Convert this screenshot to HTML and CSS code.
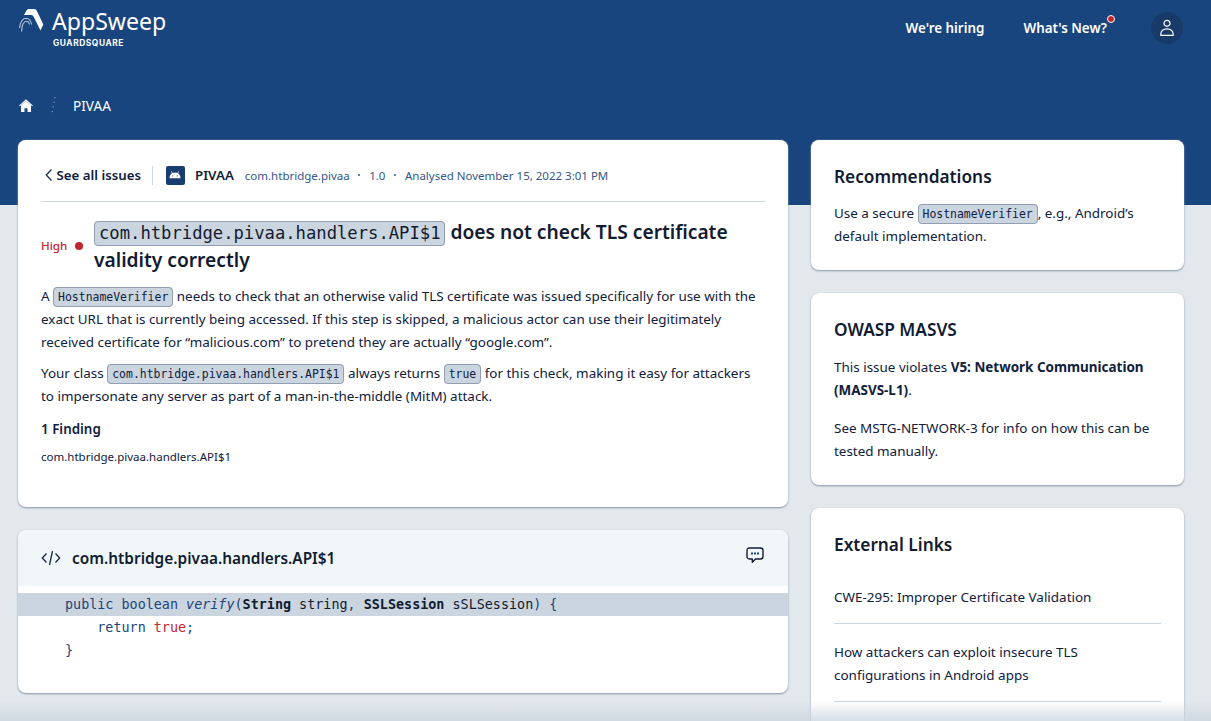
FILE: index.html
```html
<!DOCTYPE html>
<html lang="en">
<head>
<meta charset="utf-8">
<title>AppSweep</title>
<link rel="stylesheet" href="styles.css">
</head>
<body>
<div class="page">
  <header class="topbar">
    <a class="brand">
      <svg class="brand-mark" width="26" height="24" viewBox="0 0 26 24">
        <path d="M5 6 7.500 1.500Q8.200 0 9.500 0H15.500Q17 0 17.700 1.500L24.300 15.500 21.500 21.500 14.500 7.500Q13.800 6 12.500 6Z" fill="#fff"/>
        <g fill="none" stroke="#b3c3d9" stroke-width="1.100">
          <path d="M.6 19C1.300 13 4 9.500 7 9.300c3 0 5 2.700 5.700 6.200"/>
          <path d="M2.600 22.500C2.500 16 5 12.200 7.500 12.200c1.800 0 2.600 1.500 3 3.300"/>
        </g>
      </svg>
      <span class="brand-text"><span class="brand-name">AppSweep</span><span class="brand-sub">GUARDSQUARE</span></span>
    </a>
    <nav class="nav">
      <a class="hiring">We're hiring</a>
      <a class="news">What's New?<i class="news-dot"></i></a>
      <a class="avatar"><svg width="16" height="18" viewBox="0 0 16 18" fill="none" stroke="#fff" stroke-width="1.200"><circle cx="8" cy="4.300" r="3"/><path d="M1.800 16.300v-1C1.800 12 4.500 9.800 8 9.800s6.200 2.200 6.200 5.500v1Z" stroke-linejoin="round"/></svg></a>
    </nav>
  </header>
  <div class="crumbs">
    <svg width="14" height="13" viewBox="0 0 14 13"><path d="M7 1.800 12 6.500V13H8.500V9.200h-3V13H2V6.500Z" fill="#fff"/><path d="M.5 6.800 7 .9l6.500 5.900" fill="none" stroke="#fff" stroke-width="1.100"/></svg>
    <svg class="crumb-sep" width="5" height="16" viewBox="0 0 5 16"><path d="M4 0 1 16" stroke="#8fa5c5" stroke-dasharray="1.300 3.400"/></svg>
    <span>PIVAA</span>
  </div>
  <main class="columns">
    <div class="left">
      <section class="card issue">
        <div class="meta">
          <svg width="8" height="12" viewBox="0 0 8 12"><path d="M6.500.5 1.200 6l5.300 5.500" fill="none" stroke="#14294a" stroke-width="1.200"/></svg>
          <a class="back">See all issues</a>
          <span class="rule"></span>
          <span class="app-icon"><svg width="12" height="8" viewBox="0 0 12 8"><path d="M.5 7.200C.5 4.800 1.500 3.200 3 2.300L2 .6l.6-.3 1 1.600a6 6 0 0 1 4.800 0l1-1.600.6.3-1 1.700c1.500.9 2.500 2.500 2.500 4.900Z" fill="#fff"/><circle cx="3.700" cy="4.800" r=".6" fill="#19457f"/><circle cx="8.300" cy="4.800" r=".6" fill="#19457f"/></svg></span>
          <b class="app">PIVAA</b>
          <span class="info pkg">com.htbridge.pivaa</span><i class="dot"></i><span class="info">1.0</span><i class="dot"></i><span class="info date">Analysed November 15, 2022 3:01 PM</span>
        </div>
        <div class="headline">
          <span class="severity">High<i></i></span>
          <h1><code>com.htbridge.pivaa.handlers.API$1</code> does not check TLS certificate<br>validity correctly</h1>
        </div>
        <p>A <code>HostnameVerifier</code> needs to check that an otherwise valid TLS certificate was issued specifically for use with the<br>exact URL that is currently being accessed. If this step is skipped, a malicious actor can use their legitimately<br>received certificate for “malicious.com” to pretend they are actually “google.com”.</p>
        <p>Your class <code>com.htbridge.pivaa.handlers.API$1</code> always returns <code>true</code> for this check, making it easy for attackers<br>to impersonate any server as part of a man-in-the-middle (MitM) attack.</p>
        <h2 class="findings">1 Finding</h2>
        <a class="finding">com.htbridge.pivaa.handlers.API$1</a>
      </section>
      <section class="card source">
        <div class="source-head">
          <svg width="20" height="16" viewBox="0 0 20 16" fill="none" stroke="#14294a" stroke-width="1.300"><path d="M5.500 3.500 1.300 8l4.200 4.500M14.500 3.500 18.700 8l-4.200 4.500M11.500 1 8.500 15"/></svg>
          <h2>com.htbridge.pivaa.handlers.API$1</h2>
          <svg class="comment" width="18" height="17" viewBox="0 0 18 17"><path d="M3.500 1h11Q17 1 17 3.500v6q0 2.500-2.500 2.500H9.500L6.300 15.300V12H3.500Q1 12 1 9.500V3.500Q1 1 3.500 1Z" fill="none" stroke="#111c33" stroke-width="1.400" stroke-linejoin="round"/><path d="M5 5.600h2v1.800H5zm3 0h2v1.800H8zm3 0h2v1.800h-2z" fill="#19457f"/></svg>
        </div>
        <pre class="code"><span class="line hit">public boolean <em>verify</em>(<b>String</b> <u>string</u>, <b>SSLSession</b> <u>sSLSession</u>) {</span><span class="line">    return <s>true</s>;</span><span class="line">}</span></pre>
      </section>
    </div>
    <aside class="right">
      <section class="card recs">
        <h2>Recommendations</h2>
        <p>Use a secure <code>HostnameVerifier</code>, e.g., Android’s<br>default implementation.</p>
      </section>
      <section class="card masvs">
        <h2>OWASP MASVS</h2>
        <p>This issue violates <b>V5: Network Communication<br>(MASVS-L1)</b>.</p>
        <p>See <a>MSTG-NETWORK-3</a> for info on how this can be<br>tested manually.</p>
      </section>
      <section class="card links">
        <h2>External Links</h2>
        <a>CWE-295: Improper Certificate Validation</a>
        <a>How attackers can exploit insecure TLS<br>configurations in Android apps</a>
      </section>
    </aside>
  </main>
  <div class="fade"></div>
</div>
</body>
</html>
```

FILE: styles.css
```css
* { box-sizing: border-box; }
body { margin: 0; font-family: "Noto Sans", sans-serif; color: #10203d; }
h1, h2, p, pre { margin: 0; }
svg { display: block; flex: none; }
.page {
  position: relative;
  height: 721px;
  overflow: hidden;
  background: linear-gradient(#19457f 205px, #e2e8ec 205px);
}
.topbar { display: flex; justify-content: space-between; height: 90px; padding: 8px 28px 0 19px; color: #fff; }
.brand { display: flex; gap: 7px; }
.brand-mark { margin-top: 1px; }
.brand-text { display: flex; flex-direction: column; }
.brand-name { font-size: 23.1px; line-height: 27px; }
.brand-sub { margin: 2px 0 0 1px; font: 700 8.4px/12px Inter, sans-serif; letter-spacing: .55px; }
.nav { display: flex; align-items: center; height: 40px; font-size: 13.4px; font-weight: 600; white-space: nowrap; }
.hiring, .news { margin-top: -1px; }
.news { position: relative; margin-left: 39px; }
.news-dot { position: absolute; top: -4px; right: -8px; width: 8px; height: 8px; border: 1px solid #fff; border-radius: 50%; background: #c2262e; }
.avatar { display: flex; align-items: center; justify-content: center; width: 32px; height: 32px; margin-left: 44px; border-radius: 50%; background: #173a69; }
.crumbs { display: flex; align-items: center; height: 30px; padding-left: 19px; color: #fff; font-size: 13.6px; }
.crumb-sep { margin: 0 17px 0 18px; }
.columns { display: flex; gap: 23px; padding: 20px 27px 0 18px; align-items: flex-start; }
.left { display: flex; flex-direction: column; gap: 23px; width: 770px; }
.right { display: flex; flex-direction: column; gap: 23px; width: 373px; }
.card { border-radius: 8px; background: #fff; box-shadow: 0 1px 2px #8594ab, 0 0 1px #c3cfdd; white-space: nowrap; font-size: 13.44px; line-height: 23px; }
.card code {
  padding: 2px 4px;
  border: 1px solid #929fb2;
  border-radius: 4px;
  background: #cbd5e0;
  font-family: "DejaVu Sans Mono", monospace;
  font-size: 11.45px;
  line-height: 1;
}
.issue { height: 367px; padding: 0 23px; }
.meta { display: flex; align-items: center; height: 62px; padding: 9px 0 0 4px; border-bottom: 1px solid #cbd5e0; }
.back { margin-left: 3.5px; font-size: 13.25px; font-weight: 600; }
.rule { width: 1px; height: 19px; margin: 0 13px 0 11px; background: #cbd5e0; }
.app-icon { display: flex; align-items: center; justify-content: center; width: 19px; height: 19px; border-radius: 2px; background: #193d70; }
.app { margin: 0 11px 0 10px; font-size: 13.3px; font-weight: 600; }
.info { color: #34568a; font-size: 11.5px; }
.dot { width: 2px; height: 2px; margin: 0 9px 0 8.5px; border-radius: 1px; background: #3c5c8c; }
.headline { display: flex; align-items: center; height: 82px; }
.severity { display: flex; align-items: center; gap: 8px; width: 53px; padding-top: 5px; color: #c2262e; font-size: 11.6px; font-weight: 500; }
.severity i { width: 8px; height: 8px; border-radius: 50%; background: #c2262e; }
.headline h1 { padding-top: 6px; font-size: 19.2px; line-height: 28px; font-weight: 600; color: #121b30; }
.headline code { padding: 1px 4px 2px; font-size: 17.2px; font-weight: 400; }
.issue p { margin-bottom: 8px; }
.issue .headline + p { margin-top: 1px; }
.findings { margin-top: 10px; font-size: 13.4px; line-height: 23px; font-weight: 600; }
.finding { display: block; margin-top: 5px; font-size: 11.52px; line-height: 21px; }
.source { height: 163px; overflow: hidden; }
.source-head { display: flex; align-items: center; height: 56px; margin-bottom: 7px; padding: 0 24px 0 23px; background: #f1f7f8; }
.source-head h2 { margin-left: 11px; font-size: 15.4px; font-weight: 600; color: #121b30; }
.comment { margin: -6px 0 0 auto; }
.code { font: 13.42px/23px "DejaVu Sans Mono", monospace; color: #1c4478; }
.line { display: block; height: 23px; padding-left: 47px; }
.hit { background: #cbd5e0; }
.code b { color: #121b30; }
.code u { color: #121b30; text-decoration: none; }
.code s { color: #c2262e; text-decoration: none; }
.right .card { padding: 25px 23px 0; }
.right h2 { margin-bottom: 14px; font-size: 17.25px; line-height: 23px; font-weight: 600; color: #121b30; }
.recs { height: 130px; }
.masvs { height: 192px; }
.masvs h2 { margin-bottom: 15px; }
.masvs p + p { margin-top: 15px; }
.masvs b { font-weight: 700; }
.links { height: 240px; }
.links > a { display: block; padding: 17px 0 14px; border-bottom: 1px solid #cbd5e0; }
.links > h2 + a { padding: 16px 0 14px; }
.fade { position: absolute; left: 0; right: 0; bottom: 0; height: 20px; background: linear-gradient(rgba(203, 213, 224, 0), rgba(203, 213, 224, .8)); }
```
